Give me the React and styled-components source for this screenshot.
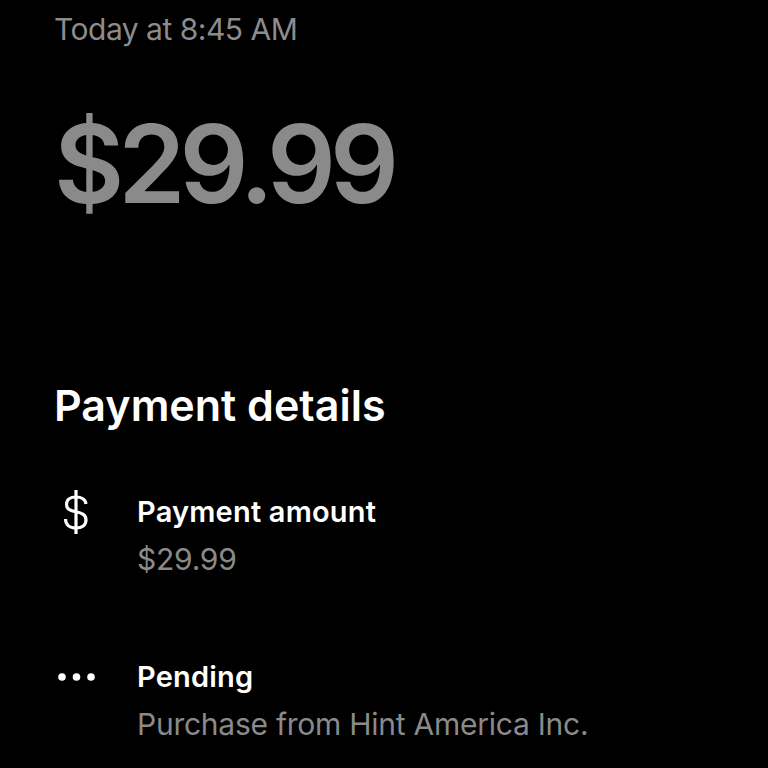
import React from "react";
import styled, { createGlobalStyle } from "styled-components";

const Global = createGlobalStyle`
  html, body { margin: 0; padding: 0; background: #000; }
  body { font-family: Inter, "Noto Sans", sans-serif; -webkit-font-smoothing: antialiased; }
`;

const Page = styled.div`
  width: 768px;
  height: 768px;
  overflow: hidden;
  background: #000;
  padding: 9px 0 0 54px;
  box-sizing: border-box;
  display: flex;
  flex-direction: column;
`;

const Timestamp = styled.div`
  font-size: 30px;
  line-height: 40px;
  color: #8c8c8c;
  letter-spacing: -0.5px;
`;

const Amount = styled.div`
  margin-top: 60px;
  font-size: 108px;
  line-height: 110px;
  font-weight: 600;
  color: #8a8a8a;
  letter-spacing: -6px;
`;

const SectionTitle = styled.h2`
  margin: 161px 0 0;
  font-size: 43px;
  line-height: 50px;
  font-weight: 600;
  color: #fff;
  letter-spacing: 0;
`;

const Rows = styled.div`
  margin-top: 62px;
  display: flex;
  flex-direction: column;
  gap: 78px;
`;

const Row = styled.div`
  display: grid;
  grid-template-columns: 83px 1fr;
  align-items: start;
`;

const IconCell = styled.div`
  height: 40px;
  display: flex;
  align-items: center;
  justify-content: flex-start;
  padding-left: ${(p) => p.$pad || 0}px;
  color: #fff;
`;

const Title = styled.div`
  font-size: 29px;
  line-height: 40px;
  font-weight: 600;
  color: #fff;
  letter-spacing: 0.2px;
`;

const Sub = styled.div`
  margin-top: 7px;
  font-size: 30px;
  line-height: 40px;
  color: #8a8a8a;
  letter-spacing: -0.25px;
`;

const DollarIcon = () => (
  <svg width="26" height="44" viewBox="0 0 26 44" fill="none" stroke="#fff" strokeWidth="3.2" strokeLinecap="butt">
    <line x1="13" y1="0" x2="13" y2="44" />
    <path d="M23 14 C22.5 9.5 18.5 7 13 7 C7 7 3.5 10 3.5 14.5 C3.5 25 23 18.5 23 30 C23 35 19 38 13 38 C6.5 38 2.5 34.5 2.5 29" />
  </svg>
);

const DotsIcon = () => (
  <svg width="37" height="10" viewBox="0 0 37 10" fill="#fff">
    <circle cx="4" cy="5" r="3.8" />
    <circle cx="18.5" cy="5" r="3.8" />
    <circle cx="33" cy="5" r="3.8" />
  </svg>
);

export default function App() {
  return (
    <>
      <Global />
      <Page>
        <Timestamp>Today at 8:45 AM</Timestamp>
        <Amount>$29.99</Amount>
        <SectionTitle>Payment details</SectionTitle>
        <Rows>
          <Row>
            <IconCell $pad={9}><DollarIcon /></IconCell>
            <div>
              <Title>Payment amount</Title>
              <Sub>$29.99</Sub>
            </div>
          </Row>
          <Row>
            <IconCell $pad={4}><DotsIcon /></IconCell>
            <div>
              <Title>Pending</Title>
              <Sub>Purchase from Hint America Inc.</Sub>
            </div>
          </Row>
        </Rows>
      </Page>
    </>
  );
}
